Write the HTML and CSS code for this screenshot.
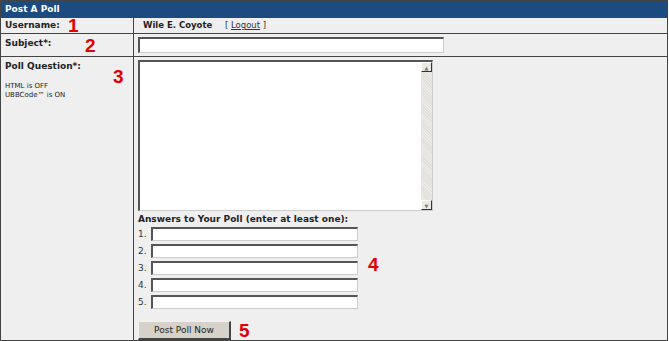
FILE: index.html
```html
<!DOCTYPE html>
<html lang="en">
<head>
    <meta charset="UTF-8">
    <title>Post A Poll</title>
    <link rel="stylesheet" href="styles.css">
</head>
<body>
    <div class="panel">
        <div class="title">Post A Poll</div>

        <div class="row row-user">
            <div class="label">Username:<span class="mark mark-1">1</span></div>
            <div class="field">
                <span class="user">Wile E. Coyote</span>
                <span class="logout">[ <a href="#">Logout</a> ]</span>
            </div>
        </div>

        <div class="row row-subject">
            <div class="label">Subject*:<span class="mark mark-2">2</span></div>
            <div class="field">
                <input type="text" class="subject">
            </div>
        </div>

        <div class="row row-poll">
            <div class="label">
                Poll Question*:<span class="mark mark-3">3</span>
                <div class="note">HTML is OFF<br>UBBCode&trade; is ON</div>
            </div>
            <div class="field">
                <div class="textbox">
                    <textarea></textarea>
                    <div class="scroll">
                        <span class="arrow">&#9650;</span>
                        <span class="arrow">&#9660;</span>
                    </div>
                </div>
                <div class="answers-title">Answers to Your Poll (enter at least one):</div>
                <div class="answers">
                    <span class="mark mark-4">4</span>
                    <div class="answer"><span>1.</span><input type="text"></div>
                    <div class="answer"><span>2.</span><input type="text"></div>
                    <div class="answer"><span>3.</span><input type="text"></div>
                    <div class="answer"><span>4.</span><input type="text"></div>
                    <div class="answer"><span>5.</span><input type="text"></div>
                </div>
                <div class="submit">
                    <button>Post Poll Now</button>
                    <span class="mark mark-5">5</span>
                </div>
            </div>
        </div>
    </div>
</body>
</html>
```

FILE: styles.css
```css
body {
    margin: 0;
    font-family: "DejaVu Sans", Verdana, sans-serif;
    background: #fff;
}
.panel {
    width: 666px;
    height: 339px;
    border: 1px solid #444;
    background: #efefef;
    display: flex;
    flex-direction: column;
}
.title {
    height: 16px;
    line-height: 16px;
    background: #1d4a7f;
    color: #fff;
    font-size: 9px;
    font-weight: bold;
    padding-left: 4px;
    border-bottom: 1px solid #444;
}
.row {
    display: grid;
    grid-template-columns: 133px 1fr;
    border-bottom: 1px solid #444;
}
.row-user { height: 15px; }
.row-subject { height: 22px; }
.row-poll { flex: 1; border-bottom: none; }
.label {
    position: relative;
    border-right: 1px solid #444;
    font-size: 9px;
    font-weight: bold;
    color: #222;
    padding: 2px 4px 0;
}
.row-subject .label { padding-top: 4px; }
.row-poll .label { padding-top: 4px; }
.note {
    font-size: 7px;
    font-weight: normal;
    line-height: 9px;
    margin-top: 11px;
}
.mark {
    position: absolute;
    font-family: "Liberation Sans", Arial, sans-serif;
    font-size: 19px;
    font-weight: bold;
    color: #e30000;
    line-height: 1;
}
.mark-1 { left: 67px; top: -2px; }
.mark-2 { left: 84px; top: 2px; }
.mark-3 { left: 112px; top: 10px; }
.mark-4 { left: 230px; top: 30px; }
.mark-5 { position: static; margin-left: 8px; }
.field {
    font-size: 9px;
    padding-left: 4px;
}
.row-user .field {
    padding-left: 9px;
    line-height: 15px;
    font-size: 8.5px;
}
.user {
    font-weight: bold;
    color: #222;
}
.logout {
    margin-left: 10px;
    color: #333;
}
.logout a { color: #333; }
input {
    display: block;
    box-sizing: border-box;
    background: #fff;
    border-style: solid;
    border-width: 2px 1px 1px 2px;
    border-color: #555 #ccc #ccc #555;
    padding: 0;
    margin: 0;
}
.subject {
    width: 306px;
    height: 16px;
    margin-top: 3px;
}
.textbox {
    display: flex;
    width: 295px;
    height: 151px;
    margin-top: 3px;
    box-sizing: border-box;
    border-style: solid;
    border-width: 2px 1px 1px 2px;
    border-color: #555 #ccc #ccc #555;
    background: #fff;
}
.textbox textarea {
    flex: 1;
    border: none;
    resize: none;
    outline: none;
    padding: 0;
}
.scroll {
    width: 11px;
    display: flex;
    flex-direction: column;
    justify-content: space-between;
    background: repeating-linear-gradient(45deg, #e2e0dc 0 1px, #ecebe8 1px 2px);
}
.arrow {
    display: block;
    height: 10px;
    font-size: 5px;
    line-height: 10px;
    text-align: center;
    color: #777;
    background: #ebe9e4;
    border-style: solid;
    border-width: 1px;
    border-color: #fff #333 #333 #fff;
    box-sizing: border-box;
}
.answers-title {
    font-size: 9px;
    font-weight: bold;
    color: #222;
    margin-top: 3px;
    line-height: 11px;
}
.answers {
    position: relative;
    width: 240px;
}
.answer {
    display: flex;
    align-items: center;
    height: 17px;
    color: #333;
}
.answer span {
    width: 13px;
}
.answer input {
    width: 207px;
    height: 14px;
}
.submit {
    display: flex;
    align-items: center;
    margin-top: 11px;
}
button {
    width: 93px;
    height: 19px;
    font-family: "DejaVu Sans", Verdana, sans-serif;
    font-size: 9px;
    color: #222;
    background: #d6d2ca;
    border-style: solid;
    border-width: 1px 2px 2px 1px;
    border-color: #f4f2ee #444 #444 #f4f2ee;
    padding: 0;
}
```
